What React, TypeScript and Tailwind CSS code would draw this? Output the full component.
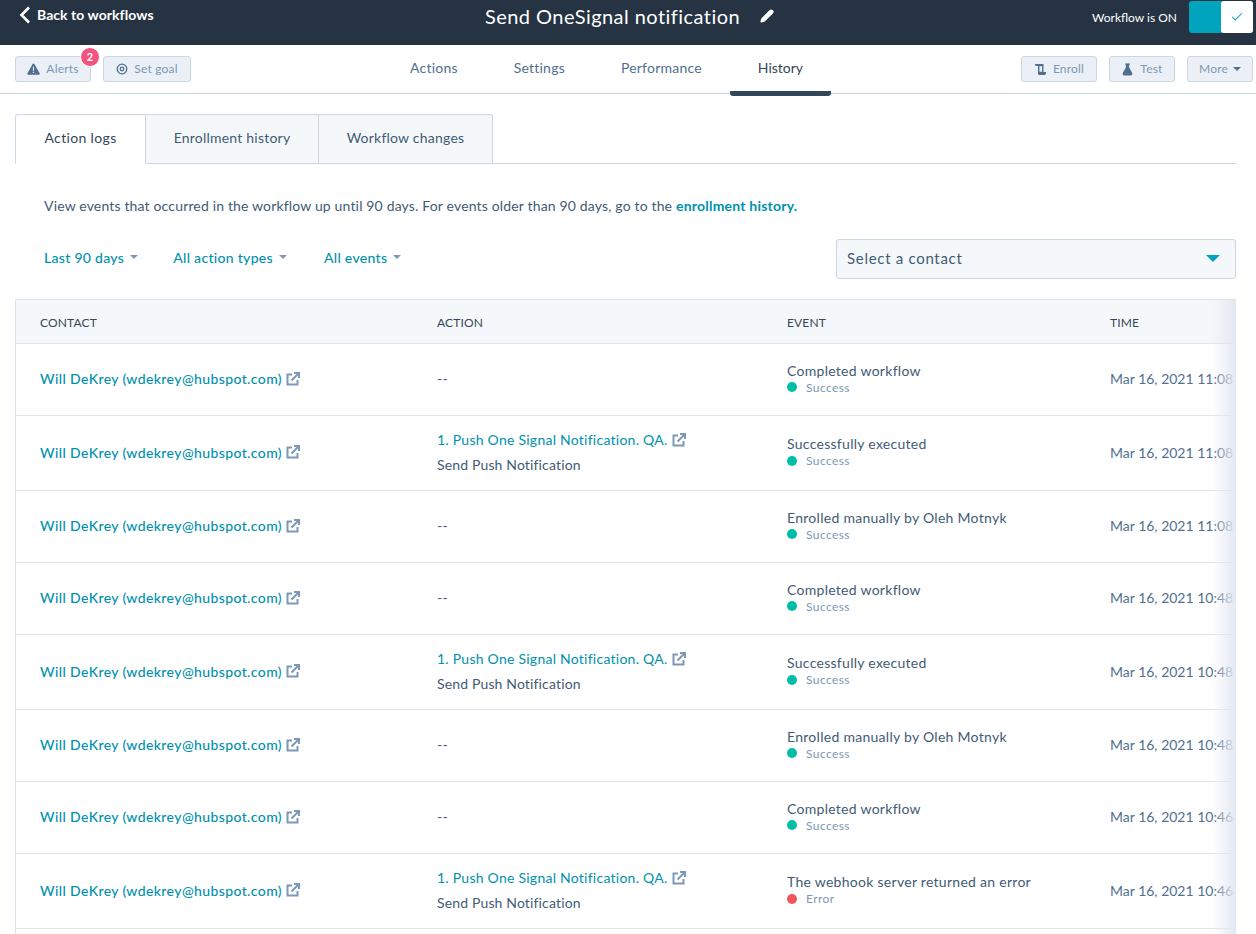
import React from "react";
import { Check, Pencil, FlaskConical } from "lucide-react";

type Row = {
  action?: boolean;
  event: string;
  status?: string;
  time: string;
};

const rows: Row[] = [
  { event: "Completed workflow", time: "Mar 16, 2021 11:08 AM" },
  { action: true, event: "Successfully executed", time: "Mar 16, 2021 11:08 AM" },
  { event: "Enrolled manually by Oleh Motnyk", time: "Mar 16, 2021 11:08 AM" },
  { event: "Completed workflow", time: "Mar 16, 2021 10:48 AM" },
  { action: true, event: "Successfully executed", time: "Mar 16, 2021 10:48 AM" },
  { event: "Enrolled manually by Oleh Motnyk", time: "Mar 16, 2021 10:48 AM" },
  { event: "Completed workflow", time: "Mar 16, 2021 10:46 AM" },
  { action: true, event: "The webhook server returned an error", status: "Error", time: "Mar 16, 2021 10:46 AM" },
];

const Caret = ({ className }: { className: string }) => (
  <span className={`inline-block border-x-[4px] border-t-[4px] border-x-transparent ${className}`} />
);

const GrayButton = ({ children, className = "" }: { children: React.ReactNode; className?: string }) => (
  <button className={`h-[26px] flex items-center justify-center gap-[6px] rounded-[3px] border border-[#cbd6e2] bg-[#eaf0f6] text-[12px] tracking-[0.2px] text-[#7c98b6] ${className}`}>
    {children}
  </button>
);

const FilterLink = ({ label, className = "" }: { label: string; className?: string }) => (
  <span className={`flex items-center gap-[6px] text-[14px] font-medium tracking-[0.3px] text-[#0091ae] ${className}`}>
    {label}
    <Caret className="border-t-[#7c98b6]" />
  </span>
);

const OutLink = () => (
  <svg width="14" height="14" viewBox="0 0 14 14" fill="none" stroke="#7c98b6" strokeWidth="2" className="shrink-0">
    <path d="M6 2.5H1.5v10h10V8" />
    <path d="M5.5 8.5L12.5 1.5" />
    <path d="M8 1h5v5" />
  </svg>
);

const App: React.FC = () => {
  return (
    <div className="w-[1256px] h-[934px] overflow-hidden bg-white font-['Lato','Liberation_Sans',sans-serif] text-[#33475b]">
      <header className="h-[45px] bg-[#253342] flex items-start relative">
        <a className="flex items-center pl-[19px] pt-[5px] text-white text-[14px] font-bold h-[24px] tracking-[0.05px]">
          <svg width="12" height="18" viewBox="0 0 12 18" fill="none" stroke="white" strokeWidth="2.6" className="mr-[6px] mt-[1px]">
            <path d="M10 1.5L2.5 9L10 16.5" />
          </svg>
          Back to workflows
        </a>
        <div className="absolute left-[485px] top-[1px] flex items-center text-white text-[20px] tracking-[0.45px]">
          Send OneSignal notification
          <Pencil size={14} strokeWidth={2.5} fill="white" className="ml-[20px] -mt-[1px]" />
        </div>
        <div className="ml-auto flex items-start pr-[3px] pt-px">
          <span className="text-white text-[12px] mt-[8px] mr-[12px]">Workflow is ON</span>
          <div className="w-[64px] h-[32px] rounded-[3px] bg-[#00a4bd] flex justify-end">
            <span className="w-[32px] h-[32px] bg-white rounded-[3px] flex items-center justify-center">
              <Check size={14} strokeWidth={1.75} className="text-[#00a4bd]" />
            </span>
          </div>
        </div>
      </header>

      <nav className="h-[49px] border-b border-[#cbd6e2] flex items-start relative px-[15px] pt-[11px]">
        <div className="flex gap-[12px]">
          <div className="relative">
            <GrayButton className="w-[76px]">
              <svg width="13" height="12" viewBox="0 0 13 12">
                <path d="M6.5.5a1 1 0 0 1 .9.5l5.2 9.3a1 1 0 0 1-.9 1.5H1.3a1 1 0 0 1-.9-1.5L5.6 1a1 1 0 0 1 .9-.5z" fill="#516f90" />
                <path d="M5.9 3.8h1.2v4H5.9zM5.9 8.7h1.2v1.2H5.9z" fill="#eaf0f6" />
              </svg>
              Alerts
            </GrayButton>
            <span className="absolute -top-[9px] -right-[9px] w-[20px] h-[20px] rounded-full bg-[#f2547d] border border-white text-white text-[11px] font-bold flex items-center justify-center">
              2
            </span>
          </div>
          <GrayButton className="w-[88px]">
            <svg width="12" height="12" viewBox="0 0 12 12" fill="none" stroke="#516f90">
              <circle cx="6" cy="6" r="4.8" strokeWidth="1.3" />
              <circle cx="6" cy="6" r="1.8" strokeWidth="1.3" />
            </svg>
            Set goal
          </GrayButton>
        </div>
        <div className="absolute left-[382px] top-0 flex text-[14px] tracking-[0.22px] text-[#516f90]">
          {["Actions", "Settings", "Performance", "History"].map((t) => (
            <div
              key={t}
              className={`px-[28px] pt-[12px] h-[51px] ${t === "History" ? "text-[#33475b] tracking-[0px] border-b-[5px] border-[#33475b] rounded-b-[3px]" : ""}`}
            >
              {t}
            </div>
          ))}
        </div>
        <div className="ml-auto flex gap-[12px] -mr-[12px]">
          <GrayButton className="w-[76px]">
            <svg width="13" height="13" viewBox="0 0 13 13" fill="#516f90">
              <path d="M1 1h8.5v8H12v1.6A1.6 1.6 0 0 1 10.4 12H5.5A1.5 1.5 0 0 1 4 10.5V3H2.6A1.6 1.6 0 0 1 1 1.4z" />
              <path d="M5.4 3.2h2.7v5.5H5.4z" fill="#eaf0f6" />
            </svg>
            Enroll
          </GrayButton>
          <GrayButton className="w-[66px]">
            <FlaskConical size={13} fill="#516f90" className="text-[#516f90]" />
            Test
          </GrayButton>
          <GrayButton className="w-[66px]">
            More
            <Caret className="border-t-[#516f90] -ml-[1px]" />
          </GrayButton>
        </div>
      </nav>

      <main className="px-[15px] w-[1236px] box-content">
        <div className="w-[1221px] mt-[20px] h-[50px] flex border-b border-[#cbd6e2] text-[14px] tracking-[0.22px]">
          <div className="w-[131px] h-[50px] pb-[3px] bg-white border border-[#cbd6e2] border-b-white rounded-tl-[3px] flex items-center justify-center text-[#33475b] tracking-[0.35px]">
            Action logs
          </div>
          <div className="w-[173px] h-[49px] pb-[3px] bg-[#f5f8fa] border-t border-r border-[#cbd6e2] flex items-center justify-center text-[#425b76]">
            Enrollment history
          </div>
          <div className="w-[174px] h-[49px] pb-[3px] bg-[#f5f8fa] border-t border-r border-[#cbd6e2] rounded-tr-[3px] flex items-center justify-center text-[#425b76]">
            Workflow changes
          </div>
        </div>

        <p className="pl-[29px] mt-[32px] h-[19px] text-[14px] leading-[19px] tracking-[0.16px] whitespace-nowrap text-[#425b76]">
          View events that occurred in the workflow up until 90 days. For events older than 90 days, go to the{" "}
          <span className="font-bold text-[#0091ae] tracking-[0.22px]">enrollment history.</span>
        </p>

        <div className="w-[1221px] flex items-center mt-[24px] h-[40px] pl-[29px]">
          <div className="flex gap-[35px] pb-[4px]">
            <FilterLink label="Last 90 days" />
            <FilterLink label="All action types" />
            <FilterLink label="All events" className="ml-[2px]" />
          </div>
          <div className="ml-auto w-[400px] h-[40px] pb-[2px] rounded-[3px] border border-[#cbd6e2] bg-[#f5f8fa] pl-[10px] pr-[15px] flex items-center justify-between text-[15px] tracking-[0.7px] text-[#425b76]">
            Select a contact
            <Caret className="border-x-[7px] border-t-[7px] border-t-[#00a4bd]" />
          </div>
        </div>

        <div className="relative w-[1221px] mt-[20px] border-l border-t border-[#dfe3eb] overflow-hidden">
          <div className="grid grid-cols-[396px_350px_323px_200px] w-[1269px] h-[44px] pt-[3px] items-center bg-[#f5f8fa] border-b border-[#dfe3eb] text-[12px] tracking-[0.15px]">
            <div className="pl-[24px]">CONTACT</div>
            <div className="pl-[25px]">ACTION</div>
            <div className="pl-[25px]">EVENT</div>
            <div className="pl-[25px]">TIME</div>
          </div>
          {rows.map((r, i) => (
            <div
              key={i}
              className={`grid grid-cols-[396px_350px_323px_200px] w-[1269px] items-center border-b border-[#dfe3eb] ${r.action ? "h-[75px]" : "h-[72px]"}`}
            >
              <div className="pl-[24px] pb-[2px] flex items-center gap-[4px] text-[14px] font-medium tracking-[0.39px] text-[#0091ae]">
                Will DeKrey (wdekrey@hubspot.com)
                <OutLink />
              </div>
              <div className="pl-[25px] text-[14px] tracking-[0.25px] text-[#425b76]">
                {r.action ? (
                  <div className="-mt-[2px]">
                    <div className="flex items-center gap-[4px] text-[#0091ae] h-[25px] leading-[25px]">
                      1. Push One Signal Notification. QA.
                      <OutLink />
                    </div>
                    <div className="h-[25px] leading-[25px] tracking-[0.15px]">Send Push Notification</div>
                  </div>
                ) : (
                  <div className="pb-[2px]">--</div>
                )}
              </div>
              <div className="pl-[25px] -mt-[2px]">
                <div className="text-[14px] leading-[17px] tracking-[0.28px] text-[#425b76]">{r.event}</div>
                <div className="flex items-center text-[12px] leading-[17px] tracking-[0.4px] text-[#7c98b6]">
                  <span className={`w-[10px] h-[10px] rounded-full mr-[9px] ${r.status === "Error" ? "bg-[#f2545b]" : "bg-[#00bda5]"}`} />
                  {r.status ?? "Success"}
                </div>
              </div>
              <div className="pl-[25px] pb-[2px] text-[14px] text-[#516f90] whitespace-nowrap">{r.time}</div>
            </div>
          ))}
          <div className="h-[10px]" />
          <div className="absolute right-0 top-0 bottom-0 w-[24px] bg-gradient-to-r from-transparent to-[#e3e8f1]" />
        </div>
      </main>
    </div>
  );
};

export default App;
